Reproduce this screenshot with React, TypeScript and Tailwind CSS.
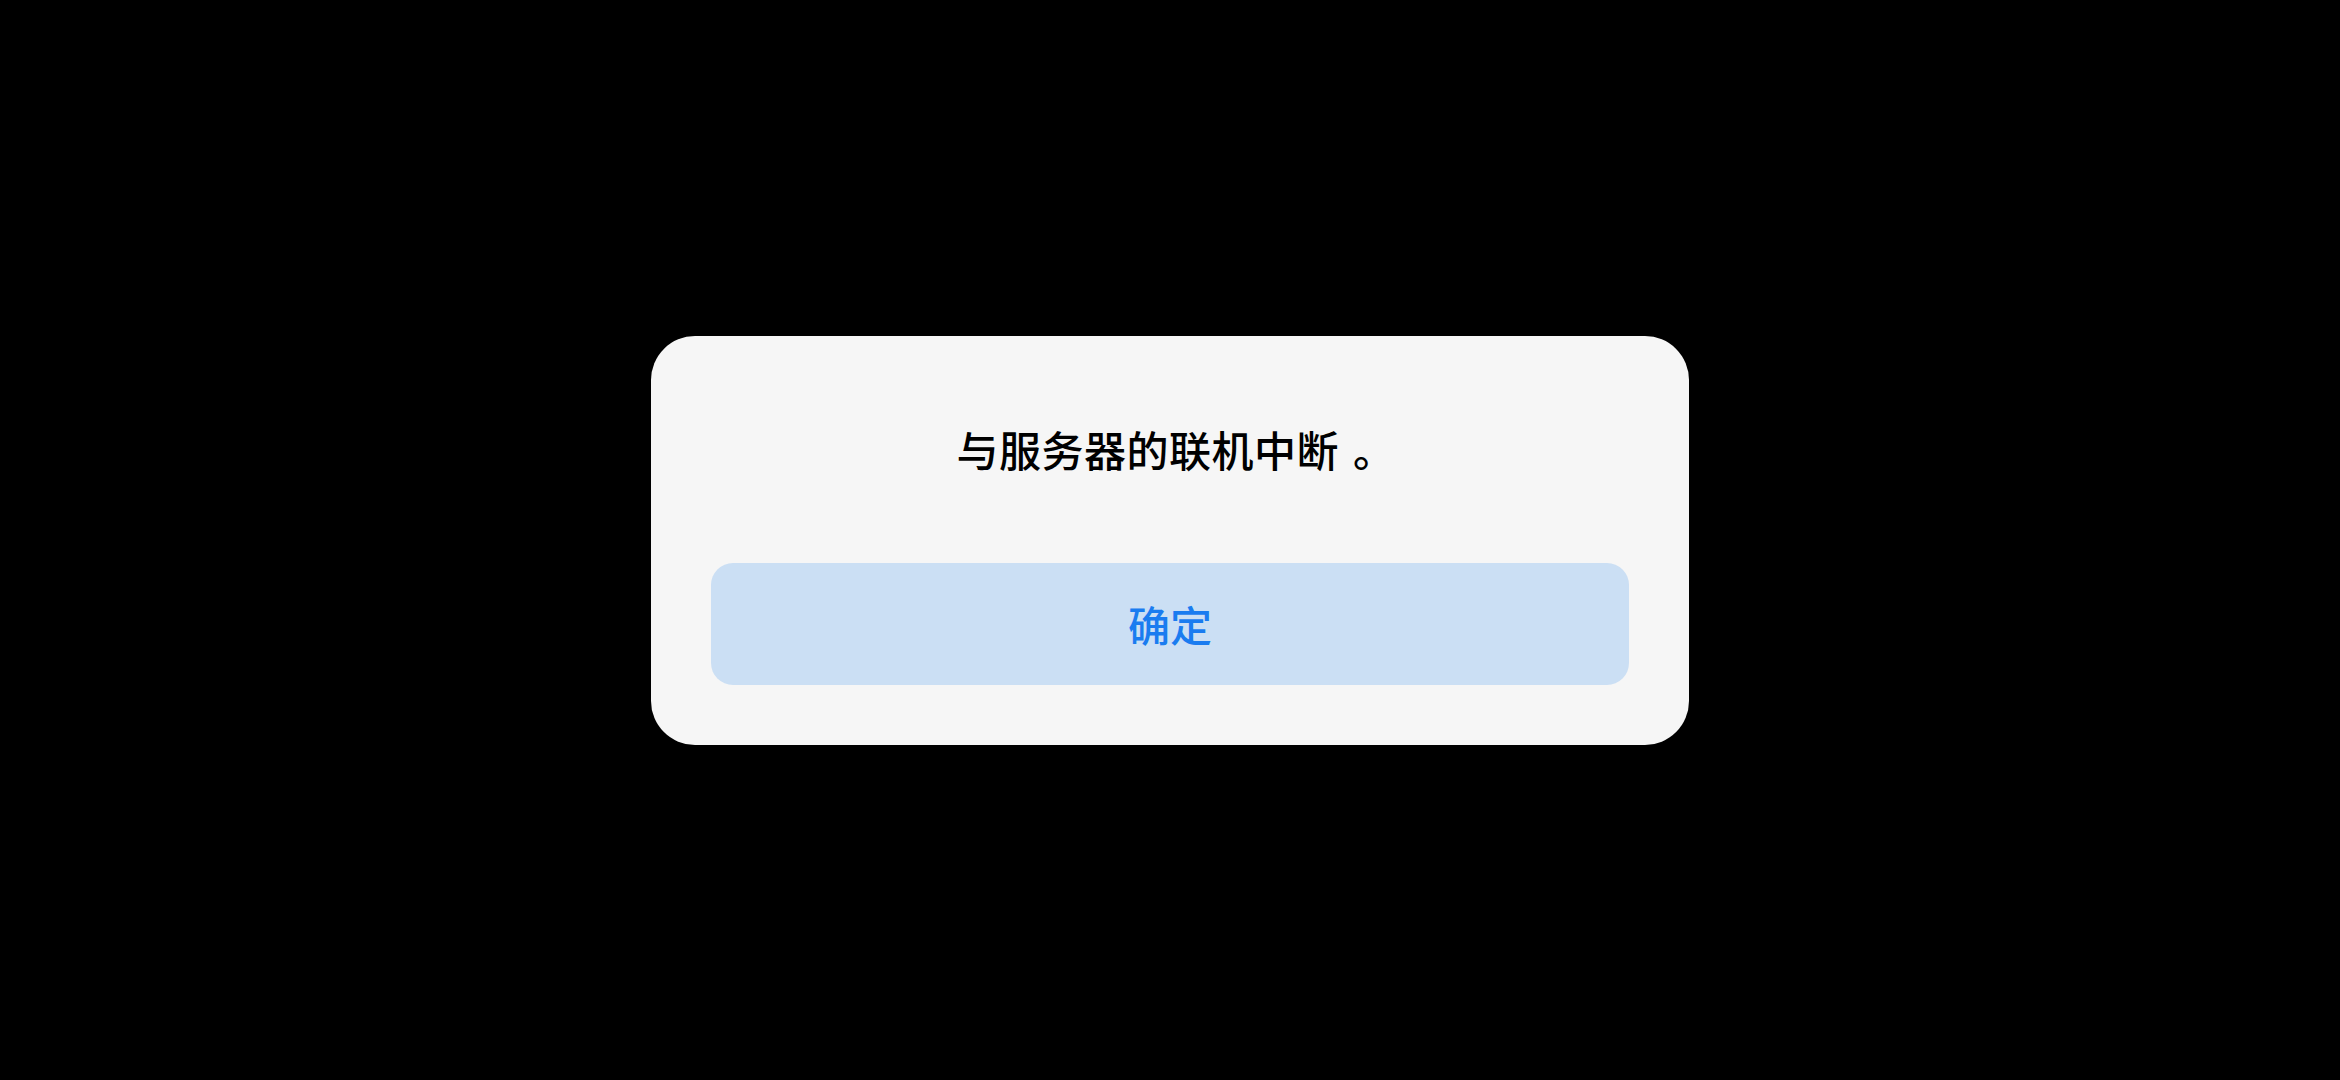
export default function App() {
  return (
    <div
      className="flex h-[1080px] w-[2340px] items-center justify-center bg-black"
      style={{ fontFamily: '"Noto Sans CJK SC", "Noto Sans", sans-serif' }}
    >
      {/* ── Dialog ─────────────────────────────────────────── */}
      <div className="flex w-[1038px] flex-col rounded-[44px] bg-[#f6f6f6] px-[60px] pt-[84px] pb-[60px]">
        <p className="pl-[12px] text-center text-[42px] leading-[58px] font-medium tracking-[0.5px] text-black">
          与服务器的联机中断 <span className="ml-[4px]">。</span>
        </p>
        <button
          type="button"
          className="mt-[85px] flex h-[122px] w-full items-center justify-center rounded-[22px] bg-[#cbdff4] text-[42px] font-medium text-[#1a7cf0]"
        >
          确定
        </button>
      </div>
    </div>
  );
}
